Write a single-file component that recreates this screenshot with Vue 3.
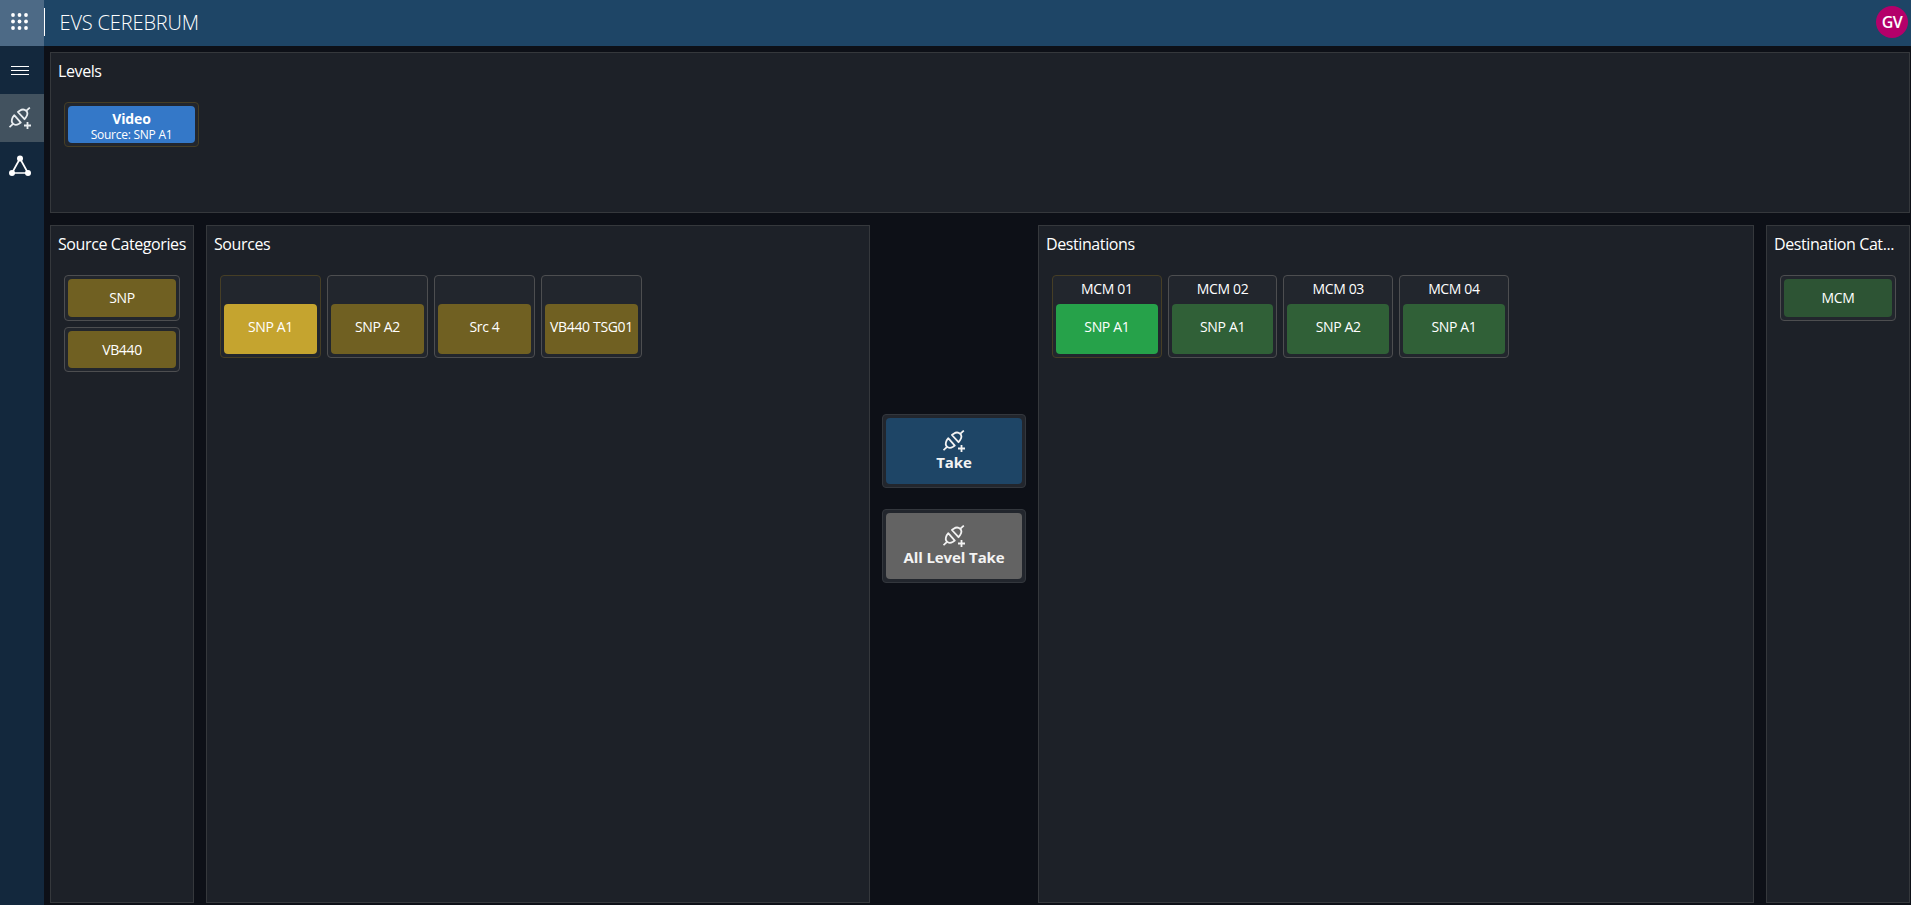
<script setup>
import { h } from 'vue'

const sourceCategories = ['SNP', 'VB440']
const destinationCategories = ['MCM']
const sources = [
  { name: 'SNP A1', selected: true },
  { name: 'SNP A2' },
  { name: 'Src 4' },
  { name: 'VB440 TSG01' },
]
const destinations = [
  { name: 'MCM 01', source: 'SNP A1', selected: true },
  { name: 'MCM 02', source: 'SNP A1' },
  { name: 'MCM 03', source: 'SNP A2' },
  { name: 'MCM 04', source: 'SNP A1' },
]
const dots = [2, 8.5, 15]

const PlugIcon = () =>
  h('svg', { width: 22, height: 22, viewBox: '0 0 22 22', fill: 'none', stroke: 'currentColor', 'stroke-width': 1.8, 'stroke-linejoin': 'round' }, [
    h('path', { d: 'M0.500 20.200L4 16.900M17.200 3.800L20.800 0.600' }),
    h('path', { d: 'M5.200 8.200L11.800 15.600L10 16.800C8 18 5.600 18.300 4 16.700C2.500 15.200 2.500 12.800 3.600 10.600Z' }),
    h('path', { d: 'M8.900 5L15.500 12.200L17 10.200C18.600 8 18.800 5.500 17.200 3.900C15.500 2.300 12.700 2.400 10.700 3.700Z' }),
    h('path', { d: 'M18.500 15V22M15 18.500H22', 'stroke-width': 1.8 }),
  ])
</script>

<template>
  <div class="app">
    <header class="topbar">
      <button class="waffle">
        <svg width="17" height="17" viewBox="0 0 17 17" fill="#fff">
          <template v-for="y in dots" :key="y">
            <circle v-for="x in dots" :key="x" :cx="x" :cy="y" r="1.9" />
          </template>
        </svg>
      </button>
      <span class="divider"></span>
      <h1>EVS CEREBRUM</h1>
      <span class="avatar">GV</span>
    </header>

    <div class="body">
      <nav class="sidebar">
        <button class="nav-item">
          <svg width="18" height="11" viewBox="0 0 18 11" stroke="#fff"><path d="M0 1.500H18M0 5.500H18M0 9.500H18" /></svg>
        </button>
        <button class="nav-item active"><PlugIcon /></button>
        <button class="nav-item">
          <svg width="22" height="22" viewBox="0 0 22 22" fill="#fff">
            <path d="M11 3.500L3 18H19Z" fill="none" stroke="#fff" stroke-width="1.700" />
            <circle cx="11" cy="3.500" r="3" /><circle cx="3" cy="18" r="3" /><circle cx="19" cy="18" r="3" />
          </svg>
        </button>
      </nav>

      <main class="content">
        <section class="panel levels">
          <h2>Levels</h2>
          <div class="tile level selected">
            <div class="face"><b>Video</b><small>Source: SNP A1</small></div>
          </div>
        </section>

        <div class="router">
          <section class="panel">
            <h2>Source Categories</h2>
            <div class="stack">
              <div v-for="c in sourceCategories" :key="c" class="tile category gold"><div class="face">{{ c }}</div></div>
            </div>
          </section>

          <section class="panel">
            <h2>Sources</h2>
            <div class="tiles">
              <div v-for="s in sources" :key="s.name" class="tile signal gold" :class="{ selected: s.selected }">
                <div class="caption"></div>
                <div class="face">{{ s.name }}</div>
              </div>
            </div>
          </section>

          <div class="actions">
            <button class="tile take"><span class="face"><PlugIcon />Take</span></button>
            <button class="tile take all"><span class="face"><PlugIcon />All Level Take</span></button>
          </div>

          <section class="panel">
            <h2>Destinations</h2>
            <div class="tiles">
              <div v-for="d in destinations" :key="d.name" class="tile signal dest green" :class="{ selected: d.selected }">
                <div class="caption">{{ d.name }}</div>
                <div class="face">{{ d.source }}</div>
              </div>
            </div>
          </section>

          <section class="panel">
            <h2>Destination Cat...</h2>
            <div class="stack">
              <div v-for="c in destinationCategories" :key="c" class="tile category dark-green"><div class="face">{{ c }}</div></div>
            </div>
          </section>
        </div>
      </main>
    </div>
  </div>
</template>

<style>
body {
  background: #0d1017;
  overflow: hidden;
}
</style>

<style scoped>
.app {
  display: flex;
  flex-direction: column;
  height: 100vh;
  color: #fff;
  font-family: 'Open Sans', 'Noto Sans', sans-serif;
}
.app * {
  box-sizing: border-box;
}
button {
  padding: 0;
  border: 0;
  background: none;
  color: inherit;
  font: inherit;
}
.topbar {
  display: flex;
  align-items: center;
  height: 46px;
  flex: none;
  padding-right: 3px;
  background: #1e4566;
}
.waffle {
  display: flex;
  align-items: center;
  justify-content: center;
  width: 44px;
  height: 46px;
  padding: 0 5px 3px 0;
  background: #4d6a86;
}
.divider {
  width: 1px;
  height: 28px;
  margin-bottom: 2px;
  background: #fff;
}
h1 {
  flex: 1;
  margin: 0 0 0 14.500px;
  font-size: 20px;
  font-weight: 300;
  line-height: 44px;
  letter-spacing: -0.150px;
  padding-bottom: 1px;
}
.avatar {
  width: 32px;
  height: 32px;
  margin-bottom: 2px;
  border-radius: 50%;
  background: #b4006a;
  font-size: 16px;
  font-weight: 600;
  line-height: 32px;
  text-align: center;
  letter-spacing: -0.500px;
}
.body {
  display: flex;
  flex: 1;
  min-height: 0;
}
.sidebar {
  width: 44px;
  background: #13283d;
}
.nav-item {
  display: flex;
  align-items: center;
  justify-content: center;
  width: 44px;
  height: 48px;
  padding-right: 4px;
}
.nav-item.active {
  background: #42525f;
  color: #e9edf0;
}
.content {
  display: flex;
  flex-direction: column;
  flex: 1;
  gap: 12px;
  padding: 6px 1px 2px 6px;
}
.panel {
  border: 1px solid #35383c;
  background: #1d2128;
  min-width: 0;
}
.levels {
  height: 161px;
}
h2 {
  margin: 7px 0 0 7px;
  font-size: 16px;
  font-weight: 400;
  line-height: 22px;
  letter-spacing: -0.400px;
  white-space: nowrap;
}
.router {
  display: grid;
  grid-template-columns: 144px 664px 144px 716px 144px;
  column-gap: 12px;
  flex: 1;
}
.tile {
  display: flex;
  flex-direction: column;
  padding: 3px;
  border: 1px solid #4d4e50;
  border-radius: 4px;
  background: #22262d;
  font-size: 14px;
  letter-spacing: -0.350px;
}
.tile.selected {
  border-color: #463e25;
}
.face {
  display: flex;
  flex-direction: column;
  align-items: center;
  justify-content: center;
  flex: 1;
  border-radius: 4px;
  white-space: nowrap;
}
.level {
  width: 135px;
  height: 45px;
  margin: 20px 0 0 13px;
}
.level .face {
  padding-top: 3px;
  background: #3478c8;
}
.level b {
  font-size: 14px;
  line-height: 17px;
  letter-spacing: -0.100px;
}
.level small {
  font-size: 12px;
  line-height: 16px;
  letter-spacing: -0.250px;
}
.stack {
  display: flex;
  flex-direction: column;
  gap: 6px;
  margin: 20px 13px 0;
}
.category {
  height: 45.500px;
}
.tiles {
  display: flex;
  gap: 6px;
  margin: 20px 13px 0;
}
.signal {
  width: 101px;
  height: 83px;
}
.dest {
  width: 109.700px;
}
.caption {
  height: 25px;
  line-height: 20px;
  text-align: center;
}
.signal .face {
  padding-bottom: 6px;
}
.gold .face {
  background: #706022;
}
.gold.selected .face {
  background: #c5a42f;
}
.green .face {
  background: #306037;
}
.green.selected .face {
  background: #26a24a;
}
.dark-green .face {
  background: #2d5434;
}
.actions {
  display: flex;
  flex-direction: column;
  gap: 21px;
  padding-top: 189px;
}
.take {
  height: 74px;
  border-color: #33373d;
  color: #f3f3f3;
  font-size: 15px;
  font-weight: 700;
  letter-spacing: -0.100px;
}
.take .face {
  width: 100%;
  padding-top: 1px;
  background: #1e4566;
  line-height: 21px;
}
.take.all .face {
  background: #636363;
}
</style>
